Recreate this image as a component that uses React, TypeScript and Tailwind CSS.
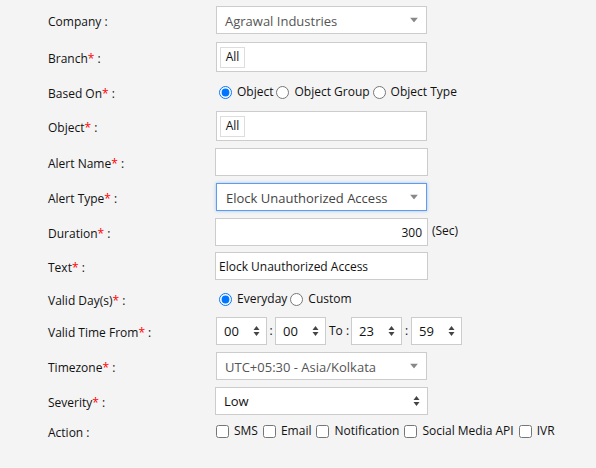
import React from "react";

const Req = () => <span className="text-[#ff0000]">*</span>;

function Label({ text, req = true }: { text: string; req?: boolean }) {
  return (
    <div className="w-[216px] shrink-0 pl-12 pt-[3px] text-[12px] text-[#111]">
      {text}
      {req && <Req />} :
    </div>
  );
}

const Caret = () => (
  <svg width="8" height="5" viewBox="0 0 8 5" className="absolute right-[8px] top-1/2 -translate-y-1/2">
    <path d="M0 0 L8 0 L4 5 Z" fill="#888" />
  </svg>
);

const UpDown = ({ cls }: { cls: string }) => (
  <svg width="7" height="11" viewBox="0 0 7 11" className={"absolute top-1/2 -translate-y-1/2 " + cls}>
    <path d="M0.5 4.5 L3.5 0.5 L6.5 4.5 Z" fill="#444" />
    <path d="M0.5 6.5 L3.5 10.5 L6.5 6.5 Z" fill="#444" />
  </svg>
);

function Row({ children, cls }: { children: React.ReactNode; cls: string }) {
  return <div className={"flex items-center " + cls}>{children}</div>;
}

function Radio({ checked, label }: { checked?: boolean; label: string }) {
  return (
    <label className="flex items-center">
      <input type="radio" readOnly checked={!!checked} className="m-0 ml-[3px] mr-[5px] h-[13px] w-[13px]" />
      <span>{label}</span>
    </label>
  );
}

function Check({ label }: { label: string }) {
  return (
    <label className="flex items-center">
      <input type="checkbox" readOnly className="m-0 mr-[5px] h-[13px] w-[13px]" />
      <span className="mr-[5px]">{label}</span>
    </label>
  );
}

function TimeBox({ v }: { v: string }) {
  return (
    <div className="relative h-[28px] w-[51px] border border-[#ccc] bg-white pl-[7px] pt-[2px] flex items-center text-[13px] text-[#111]">
      {v}
      <UpDown cls="right-[6px]" />
    </div>
  );
}

export default function App() {
  return (
    <div className="min-h-[468px] w-[596px] bg-[#f4f4f4] font-['Open_Sans',sans-serif] text-[12px] text-[#111] flex flex-col">
      <Row cls="mt-[6px] h-[28px]">
        <Label text="Company" req={false} />
        <div className="relative h-[28px] w-[211px] border border-[#ccc] bg-white pl-[8px] pt-[3px] flex items-center text-[13px] text-[#555]">
          Agrawal Industries
          <Caret />
        </div>
      </Row>
      <Row cls="mt-[8px] h-[30px]">
        <Label text="Branch" />
        <div className="h-[30px] w-[211px] border border-[#ccc] bg-white flex items-center pl-[3px]">
          <span className="h-[21px] w-[25px] border border-[#ddd] flex items-center justify-center">All</span>
        </div>
      </Row>
      <Row cls="mt-[9px] h-[22px]">
        <Label text="Based On" />
        <div className="flex items-center">
          <Radio checked label="Object" />
          <Radio label="Object Group" />
          <Radio label="Object Type" />
        </div>
      </Row>
      <Row cls="mt-[8px] h-[30px]">
        <Label text="Object" />
        <div className="h-[30px] w-[211px] border border-[#ccc] bg-white flex items-center pl-[3px]">
          <span className="h-[21px] w-[25px] border border-[#ddd] flex items-center justify-center">All</span>
        </div>
      </Row>
      <Row cls="mt-[7px] h-[28px]">
        <Label text="Alert Name" />
        <div className="-ml-px h-[28px] w-[213px] border border-[#ccc] bg-white" />
      </Row>
      <Row cls="mt-[7px] h-[28px]">
        <Label text="Alert Type" />
        <div className="relative h-[28px] w-[211px] border border-[#5c9df0] bg-white pl-[9px] pt-[3px] flex items-center text-[13px] text-[#444] shadow-[0_0_3px_rgba(80,140,230,0.5)]">
          Elock Unauthorized Access
          <Caret />
        </div>
      </Row>
      <Row cls="mt-[7px] h-[28px]">
        <Label text="Duration" />
        <div className="-ml-px h-[28px] w-[213px] border border-[#ccc] bg-white pr-[5px] pt-[1px] flex items-center justify-end">300</div>
        <span className="ml-[4px] -mt-[2px]">(Sec)</span>
      </Row>
      <Row cls="mt-[6px] h-[28px]">
        <Label text="Text" />
        <div className="-ml-px h-[28px] w-[213px] border border-[#ccc] bg-white pl-[3px] pt-[1px] flex items-center">Elock Unauthorized Access</div>
      </Row>
      <Row cls="mt-[8px] h-[22px]">
        <Label text="Valid Day(s)" />
        <div className="flex items-center">
          <Radio checked label="Everyday" />
          <Radio label="Custom" />
        </div>
      </Row>
      <Row cls="mt-[7px] h-[28px]">
        <Label text="Valid Time From" />
        <div className="flex items-center">
          <TimeBox v="00" />
          <span className="w-[8px] text-center">:</span>
          <TimeBox v="00" />
          <span className="ml-[3px] mr-[2px]">To :</span>
          <TimeBox v="23" />
          <span className="w-[9px] text-center">:</span>
          <TimeBox v="59" />
        </div>
      </Row>
      <Row cls="mt-[7px] h-[28px]">
        <Label text="Timezone" />
        <div className="relative h-[28px] w-[211px] border border-[#ccc] bg-white pl-[8px] pt-[3px] flex items-center text-[13px] text-[#555]">
          UTC+05:30 - Asia/Kolkata
          <Caret />
        </div>
      </Row>
      <Row cls="mt-[7px] h-[28px]">
        <Label text="Severity" />
        <div className="-ml-px relative h-[28px] w-[213px] border border-[#ccc] bg-white pl-[8px] pt-[2px] flex items-center text-[13px] text-[#111]">
          Low
          <UpDown cls="right-[7px]" />
        </div>
      </Row>
      <Row cls="mt-[5px] h-[22px]">
        <Label text="Action" req={false} />
        <div className="flex items-center">
          <Check label="SMS" />
          <Check label="Email" />
          <Check label="Notification" />
          <Check label="Social Media API" />
          <Check label="IVR" />
        </div>
      </Row>
    </div>
  );
}
